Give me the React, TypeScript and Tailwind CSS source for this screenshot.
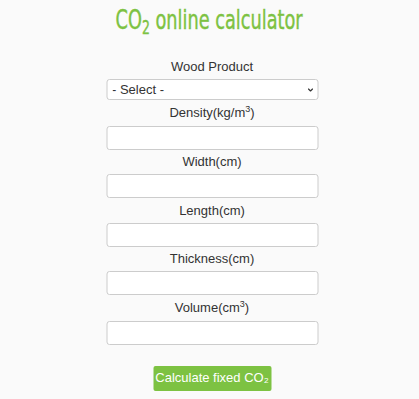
import React, { useState } from 'react';
import { ChevronDown } from 'lucide-react';

const fields = [
  { label: 'Density(kg/m', sup: '3' },
  { label: 'Width(cm)' },
  { label: 'Length(cm)' },
  { label: 'Thickness(cm)' },
  { label: 'Volume(cm', sup: '3' },
];

const App: React.FC = () => {
  const [product, setProduct] = useState('');

  return (
    <div className="min-h-screen bg-[#fafafa] font-['Liberation_Sans',Arial,sans-serif] text-[#333]">
      <div className="flex justify-center pt-[3px]">
        <h1 className="inline-block scale-x-[0.73] text-[27px] leading-[34px] font-medium text-[#7dc242] font-['DejaVu_Sans_Condensed','DejaVu_Sans',sans-serif] [-webkit-text-stroke:0.4px_#7dc242]">
          CO<span className="relative top-[5px] text-[19px]">2</span> online calculator
        </h1>
      </div>

      <div className="mx-auto mt-[16px] w-[212px] translate-x-[2.5px]">
        <div className="text-center text-[13px] leading-[24px]">Wood Product</div>
        <div className="relative">
          <select
            value={product}
            onChange={(e) => setProduct(e.target.value)}
            className="block h-[21px] w-full appearance-none rounded-[3px] border border-[#ccc] bg-white pl-[5px] text-[13px] text-[#333]"
          >
            <option value="">- Select -</option>
            <option value="glulam">Glulam</option>
            <option value="clt">CLT</option>
          </select>
          <ChevronDown className="pointer-events-none absolute right-[4px] top-[7px] h-[8px] w-[8px] text-[#333]" strokeWidth={3.5} />
        </div>

        {fields.map((f) => (
          <div key={f.label} className="mt-[0.5px]">
            <div className="text-center text-[13px] leading-[24px]">
              {f.label}
              {f.sup && (
                <>
                  <span className="relative -top-[5px] text-[9px]">{f.sup}</span>)
                </>
              )}
            </div>
            <input className="block h-[24px] w-full rounded-[3px] border border-[#ccc] bg-white px-[5px] text-[13px]" />
          </div>
        ))}

        <div className="mt-[21px] flex justify-center">
          <button className="h-[25px] w-[118px] rounded-[2px] bg-[#7dc242] text-[13px] text-white">
            Calculate fixed CO₂
          </button>
        </div>
      </div>
    </div>
  );
};

export default App;
